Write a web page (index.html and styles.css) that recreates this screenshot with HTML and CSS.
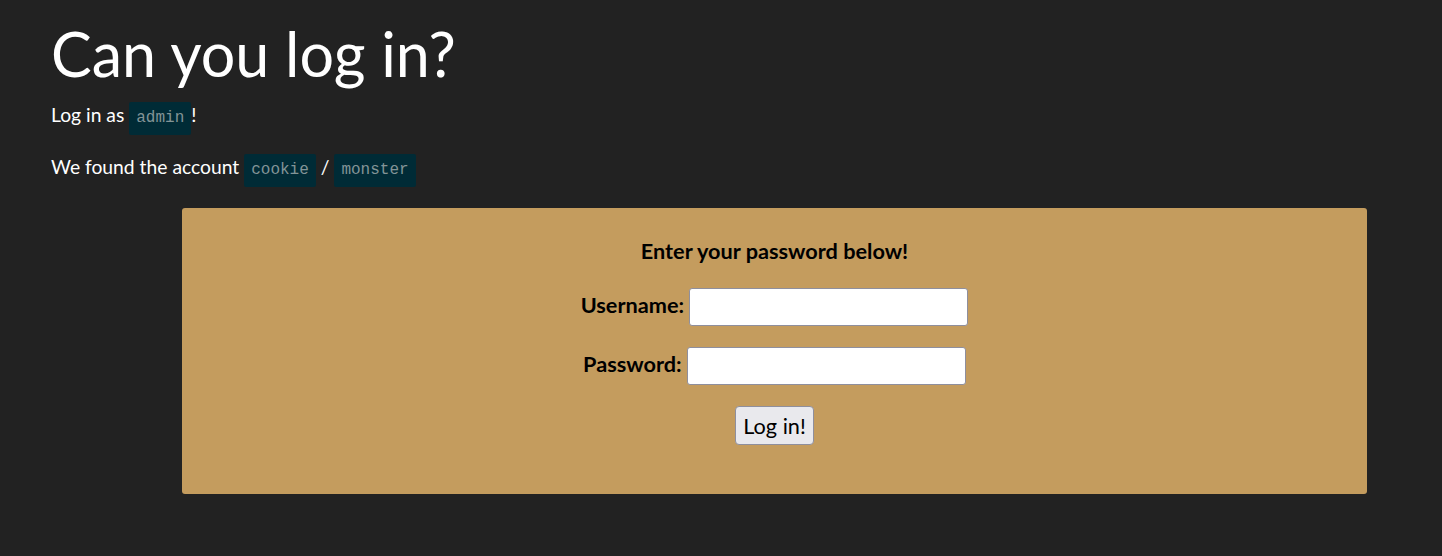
FILE: index.html
```html
<!DOCTYPE html>
<html lang="en">
  <head>
    <meta charset="UTF-8" />
    <meta name="viewport" content="width=device-width, initial-scale=1.0" />
    <title>Can you log in?</title>
    <link rel="stylesheet" href="styles.css">
  </head>
  <body>
    <div class="container">
      <h1>Can you log in?</h1>
      <p>Log in as <code>admin</code>!</p>
      <p>We found the account <code>cookie</code> / <code>monster</code></p>

      <div class="login-box">
        <form class="login-form" onsubmit="return false">
          <h4>Enter your password below!</h4>
          <div class="field">
            <label for="username">Username:</label>
            <input type="text" id="username" name="username" />
          </div>
          <div class="field">
            <label for="password">Password:</label>
            <input type="password" id="password" name="password" />
          </div>
          <div class="field">
            <button type="submit">Log in!</button>
          </div>
        </form>
      </div>
    </div>
  </body>
</html>
```

FILE: styles.css
```css
body {
  margin: 0;
  background-color: #222222;
  color: #ffffff;
  font-family: Lato, "Noto Sans", sans-serif;
  font-size: 19.3px;
}
.container {
  padding: 0 51px;
}
h1 {
  margin: 20px 0 11px;
  font-size: 61px;
  font-weight: 400;
  line-height: 1.1;
}
p {
  margin: 0 0 15px;
  line-height: 33px;
}
code {
  display: inline-block;
  padding: 0 7px;
  background-color: #002b36;
  color: #839496;
  font-family: "Liberation Mono", monospace;
  font-size: 16px;
  line-height: 33px;
  border-radius: 2px;
}
.login-box {
  margin: 21px 24px 0 131px;
  padding: 30px 0 49px;
  background-color: #c49c5e;
  color: #000000;
  border-radius: 3px;
  text-align: center;
}
.login-form h4 {
  margin: 0 0 24px;
  font-size: 21.7px;
  font-weight: 700;
}
.field {
  margin-bottom: 21px;
  font-size: 21.7px;
  font-weight: 700;
}
.field:last-child {
  margin-bottom: 0;
}
.field input {
  width: 279px;
  height: 38px;
  padding: 1px 3px;
  box-sizing: border-box;
  border: 1px solid #8f8f9d;
  border-radius: 3px;
  background: #ffffff;
  font-family: inherit;
  font-size: 20px;
  vertical-align: middle;
}
button {
  height: 39px;
  padding: 0 7px;
  background-color: #e9e9ed;
  border: 1px solid #8f8f9d;
  border-radius: 4px;
  font-family: inherit;
  font-size: 21.7px;
  font-weight: 400;
  color: #000000;
  vertical-align: middle;
}
```
